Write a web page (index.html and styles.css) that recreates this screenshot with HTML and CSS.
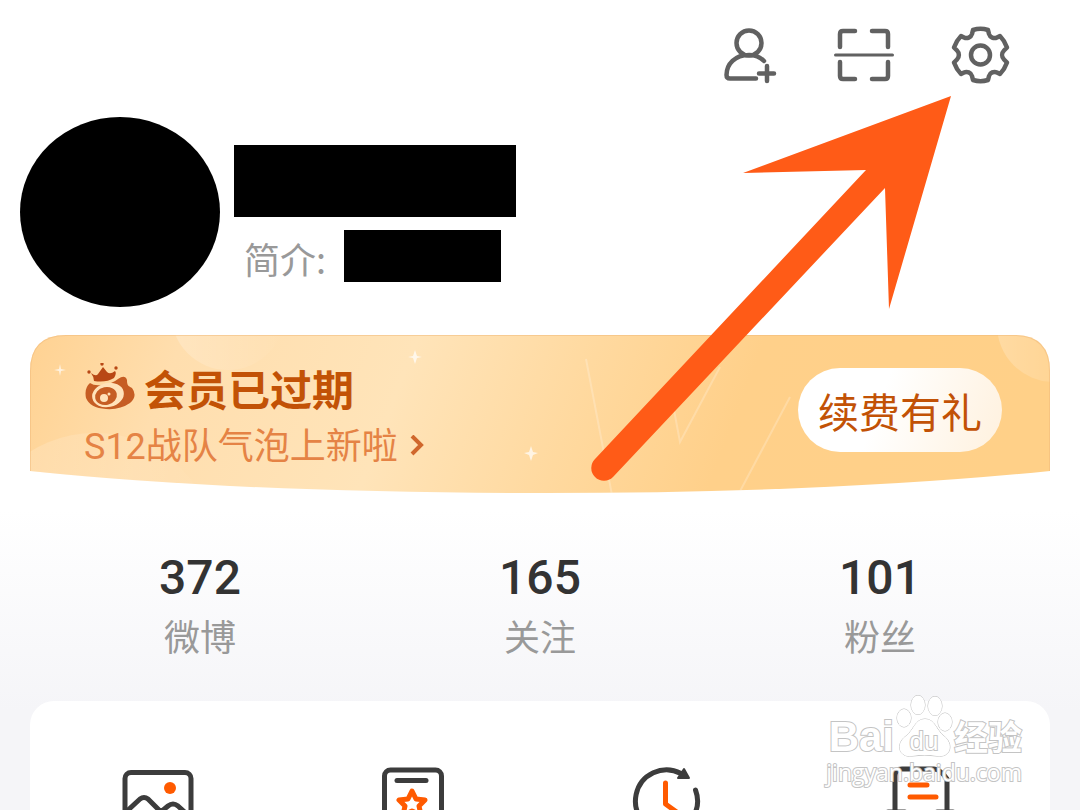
FILE: index.html
```
<!DOCTYPE html>
<html lang="zh-CN">
<head>
<meta charset="utf-8">
<title>我的</title>
<link rel="stylesheet" href="styles.css">
</head>
<body>
<header class="topbar">
	<button class="icon-btn" type="button" aria-label="添加好友">
		<svg viewBox="0 0 60 60"><circle cx="31" cy="18" r="12.500"/><path d="M46 36C42 32 36 30 31 30C17 30 8.500 39 8.500 50Q8.500 53.500 12 53.500H38M41 48.500H56M49 41V56"/></svg>
	</button>
	<button class="icon-btn" type="button" aria-label="扫一扫">
		<svg viewBox="0 0 60 60"><path d="M6 22V9Q6 6 9 6H21M38 6H51Q54 6 54 9V22M6 37V51Q6 54 9 54H21M38 54H51Q54 54 54 51V37"/><path class="thin" d="M1.500 30H58.500"/></svg>
	</button>
	<button class="icon-btn" type="button" aria-label="设置">
		<svg viewBox="0 0 60 60"><circle cx="30.500" cy="30" r="9.500"/><path d="M23 5Q30.500 2.500 38 5L39 9C40 12.500 44 14 47 12.500L50 11Q54.500 15.500 57 22.500L54 25.500C51.500 28 51.500 32 54 34.500L57 37.500Q54.500 44.500 50 49L47 47.500C44 46 40 47.500 39 51L38 55Q30.500 57.500 23 55L22 51C21 47.500 17 46 14 47.500L11 49Q6.500 44.500 4 37.500L7 34.500C9.500 32 9.500 28 7 25.500L4 22.500Q6.500 15.500 11 11L14 12.500C17 14 21 12.500 22 9Z"/></svg>
	</button>
</header>

<section class="profile">
	<div class="avatar"></div>
	<div class="info">
		<div class="name"></div>
		<div class="intro"><span>简介:</span><div class="intro-text"></div></div>
	</div>
</section>

<section class="vip">
	<svg class="vip-bg" viewBox="0 0 1020 160" preserveAspectRatio="none">
		<defs>
			<linearGradient id="gold" x1="0" y1="0" x2="1" y2="0.060">
				<stop offset="0" stop-color="#ffd292"/>
				<stop offset="0.150" stop-color="#ffdeae"/>
				<stop offset="0.380" stop-color="#ffe4b9"/>
				<stop offset="0.560" stop-color="#ffd99f"/>
				<stop offset="0.720" stop-color="#ffd08a"/>
				<stop offset="1" stop-color="#ffd088"/>
			</linearGradient>
			<linearGradient id="shine" x1="0" y1="0" x2="1" y2="0">
				<stop offset="0" stop-color="#fff" stop-opacity="0.220"/>
				<stop offset="1" stop-color="#fff" stop-opacity="0"/>
			</linearGradient>
			<clipPath id="card"><path d="M0 36Q0 0 36 0H984Q1020 0 1020 36V136Q800 158 515 158Q210 158 0 136Z"/></clipPath>
		</defs>
		<g clip-path="url(#card)">
			<rect width="1020" height="160" fill="url(#gold)"/>
			<circle cx="198" cy="-22" r="57" fill="url(#shine)"/>
			<circle cx="65" cy="220" r="122" fill="url(#shine)"/>
			<circle cx="1024" cy="-10" r="57" fill="url(#shine)"/>
			<path d="M556 24L582 160M644 75L650 107L690 32M708 160L760 62" fill="none" stroke="#fff" stroke-width="2" opacity="0.220"/>
			<path d="M0 136V36Q0 0 36 0H984Q1020 0 1020 36V136" fill="none" stroke="#f0b878" stroke-width="2" opacity="0.500"/>
			<path d="M30 29L31 34L36 35L31 36L30 41L29 36L24 35L29 34ZM385 15L387 21L392 22L387 23L385 29L383 23L378 22L383 21ZM501 111L503 117L508 118L503 120L501 126L499 120L494 118L499 117Z" fill="#fff" opacity="0.700"/>
		</g>
	</svg>
	<div class="vip-text">
		<h2 class="vip-title">
			<svg class="crown" viewBox="0 2 52 50">
				<path fill="#c65d24" d="M6 22Q10 25 18 24Q28 23 34 18Q41 13 43 19C43 24 44 25 48 27Q54 35 46 42Q36 49 22 48Q6 47 2 37Q0 27 6 22Z"/>
				<ellipse cx="24" cy="34" rx="16" ry="12" fill="#ffe2ba" transform="rotate(-12 24 34)"/>
				<ellipse cx="22" cy="35" rx="11" ry="9" fill="#c65d24" transform="rotate(-12 22 35)"/>
				<circle cx="20" cy="37" r="4" fill="#ffe2ba"/>
				<circle cx="25" cy="33" r="1.500" fill="#ffe2ba"/>
				<path fill="#b84815" d="M7 12Q12 16 14 13L19 6L23 11Q26 14 31 10Q33 12 30 17Q22 22 10 20Q10 16 7 12Z"/>
				<circle cx="5" cy="11" r="1.700" fill="#b84815"/><circle cx="18" cy="3" r="1.700" fill="#b84815"/><circle cx="32" cy="7" r="1.700" fill="#b84815"/>
			</svg>
			会员已过期
		</h2>
		<a class="vip-link" href="#">S12战队气泡上新啦<svg class="chevron" viewBox="0 2 14 24"><path d="M2 3L11 12L2 21"/></svg></a>
	</div>
	<button class="renew" type="button">续费有礼</button>
</section>

<nav class="stats">
	<a href="#"><strong>372</strong><span>微博</span></a>
	<a href="#"><strong>165</strong><span>关注</span></a>
	<a href="#"><strong>101</strong><span>粉丝</span></a>
</nav>

<section class="tools">
	<a href="#" aria-label="相册"><svg viewBox="0 0 80 80"><rect x="7" y="6.500" width="66" height="64" rx="6"/><path d="M9 45L22 33Q26 30 30 33L48 51M44 45L50 40Q55 36 60 40L72 51"/><circle class="dot" cx="52" cy="22" r="6"/></svg></a>
	<a href="#" aria-label="收藏"><svg viewBox="0 0 80 80"><rect x="11.500" y="4" width="57" height="70" rx="6"/><path d="M24 14.500H53"/><path class="orange" d="M39 25L43 33L52 34L46 40L48 49L39 45L30 49L32 40L26 34L35 33Z"/></svg></a>
	<a href="#" aria-label="浏览记录"><svg viewBox="0 0 80 80"><path d="M53 7.500A31 31 0 1 0 67.500 24"/><path class="tip" d="M56 3L61 12H50Z"/><path class="orange" d="M37.500 17V38L50 47"/></svg></a>
	<a href="#" aria-label="草稿箱"><svg viewBox="0 0 80 80"><path d="M12 46V10Q12 3 19 3H51Q57 3 64 13V46M5 46H22L28 54H48L54 46H70"/><path class="orange" d="M27 19H44M27 31H53"/></svg></a>
</section>

<!-- 指向设置按钮的箭头 -->
<svg class="arrow" viewBox="0 0 370 400"><path d="M361 6L153 83L276 80L5 369A12.500 12.500 0 0 0 23 387L295 98L299 219Z"/></svg>

<!-- 水印 -->
<div class="watermark">
	<div class="wm-logo">
		<span class="wm-bai">Bai</span>
		<span class="wm-paw"><svg viewBox="0 0 60 64"><ellipse cx="10" cy="24" rx="7" ry="9"/><ellipse cx="24" cy="11" rx="7" ry="9.500"/><ellipse cx="41" cy="12" rx="7" ry="9.500"/><ellipse cx="51" cy="28" rx="7" ry="9"/><path d="M31 25C21 25 20 36 12 42C1 50 5 64 18 62Q31 60 43 62C57 64 60 50 50 42C42 36 41 25 31 25Z"/></svg><b>du</b></span>
		<span class="wm-jy">经验</span>
	</div>
	<div class="wm-url">jingyan.baidu.com</div>
</div>
</body>
</html>
```
FILE: styles.css
```
*{
	box-sizing:border-box;
	}
html{
	overflow:hidden;
	}
body{
	margin:0;
	height:100vh;
	overflow:hidden;
	position:relative;
	font-family:Roboto, "Noto Sans CJK SC", sans-serif;
	color:#333;
	background:linear-gradient(#fff 510px, #f5f5f8 710px);
	}
a{
	color:inherit;
	text-decoration:none;
	}
button{
	border:0;
	padding:0;
	font-family:inherit;
	}
svg{
	display:block;
	}

/* 顶部图标 */
.topbar{
	display:flex;
	justify-content:flex-end;
	gap:56px;
	padding:25px 70px 0 0;
	}
.icon-btn{
	width:60px;
	height:60px;
	background:none;
	}
.icon-btn svg{
	fill:none;
	stroke:#616161;
	stroke-width:4.5;
	stroke-linecap:round;
	stroke-linejoin:round;
	}
.icon-btn .thin{
	stroke-width:3;
	}

/* 个人信息 */
.profile{
	display:flex;
	gap:14px;
	padding:32px 20px 0;
	}
.avatar{
	width:200px;
	height:190px;
	border-radius:50%;
	background:#000;
	}
.info{
	padding-top:28px;
	}
.name{
	width:282px;
	height:72px;
	background:#000;
	}
.intro{
	display:flex;
	align-items:flex-start;
	gap:18px;
	margin-top:13px;
	padding-left:10px;
	font:36px/56px "Noto Sans CJK SC", sans-serif;
	color:#999;
	}
.intro-text{
	width:157px;
	height:52px;
	background:#000;
	}

/* 会员卡 */
.vip{
	position:relative;
	display:flex;
	justify-content:space-between;
	align-items:flex-start;
	height:160px;
	margin:28px 30px 0;
	padding:28px 48px 0 54px;
	}
.vip-bg{
	position:absolute;
	left:0;
	top:0;
	width:100%;
	height:100%;
	}
.vip-text, .renew{
	position:relative;
	}
.vip-title{
	display:flex;
	align-items:flex-start;
	gap:8px;
	margin:0;
	font-size:42px;
	line-height:58px;
	color:#c25206;
	}
.crown{
	width:52px;
	height:50px;
	}
.vip-link{
	display:flex;
	align-items:center;
	gap:12px;
	font-size:36px;
	line-height:52px;
	color:#e58345;
	}
.chevron{
	width:14px;
	height:24px;
	fill:none;
	stroke:#d0672c;
	stroke-width:4;
	}
.renew{
	width:204px;
	height:84px;
	margin-top:5px;
	border-radius:42px;
	background:linear-gradient(110deg, #fff 40%, #fff1de);
	font-size:41px;
	color:#c25206;
	}

/* 数据 */
.stats{
	display:grid;
	grid-template-columns:repeat(3, 1fr);
	padding:52px 30px 0;
	text-align:center;
	}
.stats strong, .stats span{
	display:block;
	}
.stats strong{
	font-size:48px;
	line-height:62px;
	font-weight:500;
	}
.stats span{
	font-size:36px;
	line-height:60px;
	color:#999;
	}

/* 功能入口 */
.tools{
	display:grid;
	grid-template-columns:repeat(4, 1fr);
	justify-items:center;
	margin:32px 30px 0;
	padding:65px 0 0;
	border-radius:24px 24px 0 0;
	background:#fff;
	}
.tools svg{
	width:80px;
	height:80px;
	fill:none;
	stroke:#3c3c3c;
	stroke-width:5;
	stroke-linecap:round;
	stroke-linejoin:round;
	}
.tools .orange{
	stroke:#ff5a00;
	}
.tools .dot{
	fill:#ff5a00;
	stroke:none;
	}
.tools .tip{
	fill:#3c3c3c;
	stroke-width:2;
	}

.arrow{
	position:absolute;
	left:590px;
	top:90px;
	width:370px;
	height:400px;
	fill:#ff5b17;
	pointer-events:none;
	}

/* 水印 */
.watermark{
	position:absolute;
	top:694px;
	right:58px;
	color:#fff;
	-webkit-text-stroke:2px #c4c4c4;
	paint-order:stroke fill;
	}
.wm-logo{
	display:flex;
	justify-content:flex-end;
	align-items:flex-end;
	height:64px;
	}
.wm-bai{
	font:bold 42px/42px "Liberation Sans", sans-serif;
	}
.wm-paw{
	position:relative;
	width:60px;
	height:64px;
	}
.wm-paw svg{
	fill:#fff;
	stroke:#bbb;
	}
.wm-paw b{
	position:absolute;
	left:0;
	right:0;
	top:34px;
	text-align:center;
	font:26px/26px "Liberation Sans", sans-serif;
	}
.wm-jy{
	font:bold 34px/44px "Noto Sans CJK SC", sans-serif;
	}
.wm-url{
	font:23px/28px "Open Sans", sans-serif;
	text-align:right;
	}
```
